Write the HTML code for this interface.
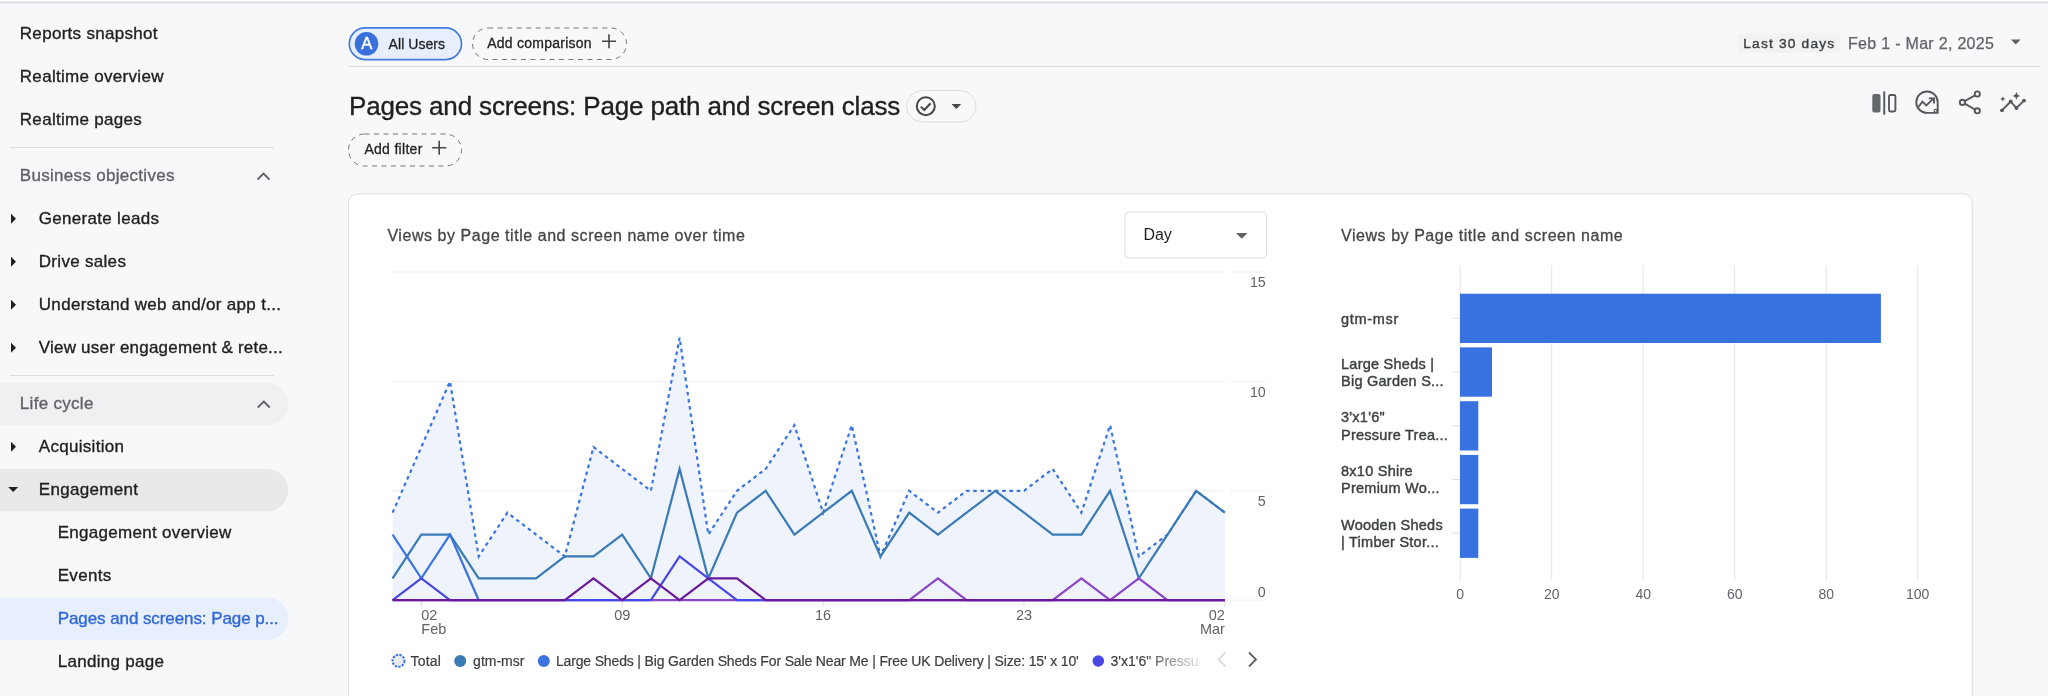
<!DOCTYPE html><html><head><meta charset="utf-8"><style>
html,body{margin:0;padding:0;background:#f7f8fa;width:2048px;height:696px;overflow:hidden}
svg{position:absolute;left:0;top:0;font-family:"Liberation Sans", sans-serif;will-change:transform}
</style></head><body>
<svg width="2048" height="696" viewBox="0 0 2048 696">
<defs>
<linearGradient id="fade" x1="0" x2="1" y1="0" y2="0">
<stop offset="0" stop-color="#fff" stop-opacity="0"/><stop offset="1" stop-color="#fff" stop-opacity="1"/>
</linearGradient>
</defs>

<rect x="0" y="0" width="2048" height="1" fill="#ffffff"/>
<rect x="0" y="1" width="2048" height="1" fill="#eceef0"/>
<rect x="0" y="2" width="2048" height="1" fill="#dadce0"/>
<rect x="0" y="3" width="2048" height="1" fill="#eceef1"/>
<rect x="0" y="4" width="2048" height="1" fill="#f3f4f7"/>
<path d="M0,383 H267 A21.25,21.25 0 0 1 267,425.5 H0 Z" fill="#eff0f2"/>
<path d="M0,469 H267 A21.25,21.25 0 0 1 267,511.5 H0 Z" fill="#e8e9eb"/>
<path d="M0,597.5 H267 A21.25,21.25 0 0 1 267,640 H0 Z" fill="#e8effc"/>
<text x="19.8" y="39" font-size="17" fill="#1f1f1f" font-weight="normal" letter-spacing="0.3" text-anchor="start" stroke="#1f1f1f" stroke-width="0.35">Reports snapshot</text>
<text x="19.8" y="81.5" font-size="17" fill="#1f1f1f" font-weight="normal" letter-spacing="0.3" text-anchor="start" stroke="#1f1f1f" stroke-width="0.35">Realtime overview</text>
<text x="19.8" y="124.6" font-size="17" fill="#1f1f1f" font-weight="normal" letter-spacing="0.3" text-anchor="start" stroke="#1f1f1f" stroke-width="0.35">Realtime pages</text>
<rect x="10" y="147" width="264" height="1" fill="#dadce0"/>
<text x="19.8" y="181.3" font-size="17" fill="#5f6368" font-weight="normal" letter-spacing="0.3" text-anchor="start" stroke="#5f6368" stroke-width="0.35">Business objectives</text>
<path d="M257.5,179.5 L263.5,173.5 L269.5,179.5" fill="none" stroke="#5f6368" stroke-width="1.8"/>
<text x="38.8" y="224.2" font-size="17" fill="#1f1f1f" font-weight="normal" letter-spacing="0.3" text-anchor="start" stroke="#1f1f1f" stroke-width="0.35">Generate leads</text>
<path d="M11.0,213.7 L16.0,218.7 L11.0,223.7 Z" fill="#1f1f1f"/>
<text x="38.8" y="267.2" font-size="17" fill="#1f1f1f" font-weight="normal" letter-spacing="0.3" text-anchor="start" stroke="#1f1f1f" stroke-width="0.35">Drive sales</text>
<path d="M11.0,256.7 L16.0,261.7 L11.0,266.7 Z" fill="#1f1f1f"/>
<text x="38.8" y="310.2" font-size="17" fill="#1f1f1f" font-weight="normal" letter-spacing="0.3" text-anchor="start" stroke="#1f1f1f" stroke-width="0.35">Understand web and/or app t...</text>
<path d="M11.0,299.7 L16.0,304.7 L11.0,309.7 Z" fill="#1f1f1f"/>
<text x="38.8" y="353.2" font-size="17" fill="#1f1f1f" font-weight="normal" letter-spacing="0.21" text-anchor="start" stroke="#1f1f1f" stroke-width="0.35">View user engagement &amp; rete...</text>
<path d="M11.0,342.7 L16.0,347.7 L11.0,352.7 Z" fill="#1f1f1f"/>
<rect x="10" y="375" width="264" height="1" fill="#dadce0"/>
<text x="19.8" y="409" font-size="17" fill="#5f6368" font-weight="normal" letter-spacing="0.3" text-anchor="start" stroke="#5f6368" stroke-width="0.35">Life cycle</text>
<path d="M257.8,407.5 L263.8,401.5 L269.8,407.5" fill="none" stroke="#5f6368" stroke-width="1.8"/>
<text x="38.8" y="452.3" font-size="17" fill="#1f1f1f" font-weight="normal" letter-spacing="0.3" text-anchor="start" stroke="#1f1f1f" stroke-width="0.35">Acquisition</text>
<path d="M11.0,441.8 L16.0,446.8 L11.0,451.8 Z" fill="#1f1f1f"/>
<text x="38.8" y="495.1" font-size="17" fill="#1f1f1f" font-weight="normal" letter-spacing="0.3" text-anchor="start" stroke="#1f1f1f" stroke-width="0.35">Engagement</text>
<path d="M8.2,487.0 L18.2,487.0 L13.2,492.0 Z" fill="#1f1f1f"/>
<text x="57.7" y="538" font-size="17" fill="#1f1f1f" font-weight="normal" letter-spacing="0.3" text-anchor="start" stroke="#1f1f1f" stroke-width="0.35">Engagement overview</text>
<text x="57.7" y="580.8" font-size="17" fill="#1f1f1f" font-weight="normal" letter-spacing="0.3" text-anchor="start" stroke="#1f1f1f" stroke-width="0.35">Events</text>
<text x="57.7" y="623.7" font-size="17" fill="#2f68d8" font-weight="normal" letter-spacing="-0.08" text-anchor="start" stroke="#2f68d8" stroke-width="0.35">Pages and screens: Page p...</text>
<text x="57.7" y="666.5" font-size="17" fill="#1f1f1f" font-weight="normal" letter-spacing="0.3" text-anchor="start" stroke="#1f1f1f" stroke-width="0.35">Landing page</text>
<rect x="349.3" y="27.9" width="112.2" height="31.7" rx="15.85" fill="#e8effc" stroke="#4279e4" stroke-width="1.7"/>
<circle cx="366.5" cy="43.8" r="11.8" fill="#3a70dc"/>
<text x="366.7" y="49.2" font-size="16.5" fill="#ffffff" font-weight="normal" letter-spacing="0" text-anchor="middle" stroke="#ffffff" stroke-width="0.5">A</text>
<text x="388.6" y="48.9" font-size="14" fill="#1f1f1f" font-weight="normal" letter-spacing="0.05" text-anchor="start" stroke="#1f1f1f" stroke-width="0.3">All Users</text>
<rect x="472.5" y="28" width="154" height="31.5" rx="15.75" fill="none" stroke="#757575" stroke-width="1" stroke-dasharray="5 4.5"/>
<text x="487.2" y="47.7" font-size="14" fill="#1f1f1f" font-weight="normal" letter-spacing="0.25" text-anchor="start" stroke="#1f1f1f" stroke-width="0.3">Add comparison</text>
<path d="M602.0,41.3 H616.0 M609,34.3 V48.3" stroke="#444746" stroke-width="1.6" fill="none"/>
<rect x="348" y="66" width="1692" height="1" fill="#dadce0"/>
<rect x="1738" y="33.3" width="102.5" height="19.4" fill="#f1f2f4"/>
<text x="1743.3" y="47.7" font-size="13.7" fill="#3c4043" font-weight="normal" letter-spacing="1.2" text-anchor="start" stroke="#3c4043" stroke-width="0.4">Last 30 days</text>
<text x="1848" y="48.5" font-size="16" fill="#5f6368" font-weight="normal" letter-spacing="0.3" text-anchor="start" stroke="#5f6368" stroke-width="0.25">Feb 1 - Mar 2, 2025</text>
<path d="M2010.8,39.4 H2020.7 L2015.75,44.4 Z" fill="#5f6368"/>
<text x="349" y="115.1" font-size="26" fill="#1f1f1f" font-weight="normal" letter-spacing="-0.15" text-anchor="start" stroke="#1f1f1f" stroke-width="0.35">Pages and screens: Page path and screen class</text>
<rect x="906.5" y="90.5" width="69.5" height="31.5" rx="15.75" fill="none" stroke="#dadce0" stroke-width="1"/>
<circle cx="925.8" cy="106.2" r="9" fill="none" stroke="#444746" stroke-width="2"/>
<path d="M920.8,106.6 L924.3,110 L930.6,103.3" fill="none" stroke="#444746" stroke-width="2"/>
<path d="M951.5,104 H961.2 L956.35,109 Z" fill="#444746"/>
<rect x="348.5" y="134" width="113" height="32" rx="16" fill="none" stroke="#757575" stroke-width="1" stroke-dasharray="5 4.5"/>
<text x="364.4" y="154.1" font-size="14" fill="#1f1f1f" font-weight="normal" letter-spacing="0.3" text-anchor="start" stroke="#1f1f1f" stroke-width="0.3">Add filter</text>
<path d="M432.2,147.7 H446.2 M439.2,140.7 V154.7" stroke="#444746" stroke-width="1.6" fill="none"/>
<rect x="1872.3" y="94" width="8.2" height="18.5" rx="2" fill="#65686c"/>
<rect x="1883.3" y="91.4" width="1.9" height="23.3" fill="#55585c"/>
<rect x="1889" y="95" width="6.4" height="16.5" rx="1.5" fill="none" stroke="#55585c" stroke-width="1.9"/>
<path d="M1937.7,102.2 A10.7,10.7 0 1 0 1927,112.9 H1937.7 Z" fill="none" stroke="#55585c" stroke-width="1.9" stroke-linejoin="round"/>
<circle cx="1935.6" cy="110.8" r="1.5" fill="#f7f8fa" stroke="#55585c" stroke-width="1.2"/>
<path d="M1918.6,106.8 L1922.4,101.6 L1926.3,105.4 L1933,98.9" fill="none" stroke="#55585c" stroke-width="1.9"/>
<path d="M1928.8,98.4 H1934 V103.4" fill="none" stroke="#55585c" stroke-width="1.9"/>
<circle cx="1977.3" cy="94" r="2.6" fill="none" stroke="#55585c" stroke-width="1.9"/>
<circle cx="1962.4" cy="102.4" r="2.6" fill="none" stroke="#55585c" stroke-width="1.9"/>
<circle cx="1977.3" cy="110.8" r="2.6" fill="none" stroke="#55585c" stroke-width="1.9"/>
<path d="M1964.7,101.1 L1975,95.3 M1964.7,103.7 L1975,109.5" fill="none" stroke="#55585c" stroke-width="1.9"/>
<path d="M2002,110.3 L2010.7,101.5 L2016.4,108.1 L2024,100.6" fill="none" stroke="#55585c" stroke-width="1.9" stroke-linejoin="round"/>
<circle cx="2002" cy="110.3" r="1.9" fill="#55585c"/>
<circle cx="2010.7" cy="101.5" r="1.9" fill="#55585c"/>
<circle cx="2016.4" cy="108.1" r="1.9" fill="#55585c"/>
<circle cx="2024" cy="100.6" r="1.9" fill="#55585c"/>
<path d="M2016.4,92 L2017.6,94.7 L2020.3,95.9 L2017.6,97.1 L2016.4,99.8 L2015.2,97.1 L2012.5,95.9 L2015.2,94.7 Z" fill="#55585c"/>
<path d="M2002.8,96.4 L2003.6,98.1 L2005.3,98.9 L2003.6,99.7 L2002.8,101.4 L2002,99.7 L2000.3,98.9 L2002,98.1 Z" fill="#55585c"/>
<rect x="348.5" y="193.8" width="1623.8" height="560" rx="9" fill="#ffffff" stroke="#dadce0" stroke-width="1"/>
<text x="387.4" y="240.8" font-size="16" fill="#444746" font-weight="normal" letter-spacing="0.55" text-anchor="start" stroke="#444746" stroke-width="0.3">Views by Page title and screen name over time</text>
<rect x="1125" y="212" width="141.5" height="46" rx="4" fill="#fff" stroke="#dadce0" stroke-width="1"/>
<text x="1143.4" y="240" font-size="16" fill="#1f1f1f" font-weight="normal" letter-spacing="0" text-anchor="start" >Day</text>
<path d="M1236,233 H1247.6 L1241.8,238.8 Z" fill="#5f6368"/>
<rect x="392" y="271.5" width="832.5" height="1" fill="#eceef0"/>
<rect x="1229.5" y="271.5" width="36" height="1" fill="#eceef0"/>
<text x="1265.8" y="287" font-size="14.3" fill="#5f6368" font-weight="normal" letter-spacing="0" text-anchor="end" >15</text>
<rect x="392" y="380.9" width="832.5" height="1" fill="#eceef0"/>
<rect x="1229.5" y="380.9" width="36" height="1" fill="#eceef0"/>
<text x="1265.8" y="396.9" font-size="14.3" fill="#5f6368" font-weight="normal" letter-spacing="0" text-anchor="end" >10</text>
<rect x="392" y="490.3" width="832.5" height="1" fill="#eceef0"/>
<rect x="1229.5" y="490.3" width="36" height="1" fill="#eceef0"/>
<text x="1265.8" y="506.2" font-size="14.3" fill="#5f6368" font-weight="normal" letter-spacing="0" text-anchor="end" >5</text>
<rect x="1229.5" y="599.7" width="36" height="1" fill="#eceef0"/>
<text x="1265.8" y="596.6" font-size="14.3" fill="#5f6368" font-weight="normal" letter-spacing="0" text-anchor="end" >0</text>
<path d="M392.60,600.2 L392.60,512.68 421.30,447.04 450.00,381.40 478.70,556.44 507.40,512.68 536.10,534.56 564.80,556.44 593.50,447.04 622.20,468.92 650.90,490.80 679.60,337.64 708.30,534.56 737.00,490.80 765.70,468.92 794.40,425.16 823.10,512.68 851.80,425.16 880.50,556.44 909.20,490.80 937.90,512.68 966.60,490.80 995.30,490.80 1024.00,490.80 1052.70,468.92 1081.40,512.68 1110.10,425.16 1138.80,556.44 1167.50,534.56 1196.20,490.80 1224.90,512.68 L1224.90,600.2 Z" fill="#eef3fc"/>
<rect x="420.8" y="600.5" width="1" height="6.5" fill="#dadce0"/>
<rect x="621.7" y="600.5" width="1" height="6.5" fill="#dadce0"/>
<rect x="822.6" y="600.5" width="1" height="6.5" fill="#dadce0"/>
<rect x="1023.5" y="600.5" width="1" height="6.5" fill="#dadce0"/>
<rect x="1224.4" y="600.5" width="1" height="6.5" fill="#dadce0"/>
<rect x="392" y="599.7" width="832.5" height="1" fill="#dadce0"/>
<polyline points="392.60,512.68 421.30,447.04 450.00,381.40 478.70,556.44 507.40,512.68 536.10,534.56 564.80,556.44 593.50,447.04 622.20,468.92 650.90,490.80 679.60,337.64 708.30,534.56 737.00,490.80 765.70,468.92 794.40,425.16 823.10,512.68 851.80,425.16 880.50,556.44 909.20,490.80 937.90,512.68 966.60,490.80 995.30,490.80 1024.00,490.80 1052.70,468.92 1081.40,512.68 1110.10,425.16 1138.80,556.44 1167.50,534.56 1196.20,490.80 1224.90,512.68" fill="none" stroke="#3b74e0" stroke-width="2.2" stroke-dasharray="3.6 3.65"/>
<polyline points="392.60,578.32 421.30,534.56 450.00,534.56 478.70,578.32 507.40,578.32 536.10,578.32 564.80,556.44 593.50,556.44 622.20,534.56 650.90,578.32 679.60,468.92 708.30,578.32 737.00,512.68 765.70,490.80 794.40,534.56 823.10,512.68 851.80,490.80 880.50,556.44 909.20,512.68 937.90,534.56 966.60,512.68 995.30,490.80 1024.00,512.68 1052.70,534.56 1081.40,534.56 1110.10,490.80 1138.80,578.32 1167.50,534.56 1196.20,490.80 1224.90,512.68" fill="none" stroke="#3a7ab5" stroke-width="2.2" stroke-linejoin="miter"/>
<polyline points="392.60,534.56 421.30,578.32 450.00,534.56 478.70,600.20" fill="none" stroke="#3b73e0" stroke-width="2.2"/>
<polyline points="392.60,600.20 421.30,600.20 450.00,600.20 478.70,600.20 507.40,600.20 536.10,600.20 564.80,600.20 593.50,600.20 622.20,600.20 650.90,600.20 679.60,600.20 708.30,600.20 737.00,600.20 765.70,600.20 794.40,600.20 823.10,600.20 851.80,600.20 880.50,600.20 909.20,600.20 937.90,578.32 966.60,600.20 995.30,600.20 1024.00,600.20 1052.70,600.20 1081.40,578.32 1110.10,600.20 1138.80,578.32 1167.50,600.20 1196.20,600.20 1224.90,600.20" fill="none" stroke="#8a45c8" stroke-width="2.2"/>
<polyline points="392.60,600.20 421.30,578.32 450.00,600.20 478.70,600.20 507.40,600.20 536.10,600.20 564.80,600.20 593.50,600.20 622.20,600.20 650.90,600.20 679.60,556.44 708.30,578.32 737.00,600.20 765.70,600.20 794.40,600.20 823.10,600.20 851.80,600.20 880.50,600.20 909.20,600.20 937.90,600.20 966.60,600.20 995.30,600.20 1024.00,600.20 1052.70,600.20 1081.40,600.20 1110.10,600.20 1138.80,600.20 1167.50,600.20 1196.20,600.20 1224.90,600.20" fill="none" stroke="#4848e6" stroke-width="2.2"/>
<polyline points="392.60,600.20 421.30,600.20 450.00,600.20 478.70,600.20 507.40,600.20 536.10,600.20 564.80,600.20 593.50,578.32 622.20,600.20 650.90,578.32 679.60,600.20 708.30,578.32 737.00,578.32 765.70,600.20 794.40,600.20 823.10,600.20 851.80,600.20 880.50,600.20 909.20,600.20 937.90,600.20 966.60,600.20 995.30,600.20 1024.00,600.20 1052.70,600.20 1081.40,600.20 1110.10,600.20 1138.80,600.20 1167.50,600.20 1196.20,600.20 1224.90,600.20" fill="none" stroke="#6a1a9a" stroke-width="2.2"/>
<text x="421.3" y="619.8" font-size="14.5" fill="#5f6368" font-weight="normal" letter-spacing="0" text-anchor="start" >02</text>
<text x="421.3" y="633.9" font-size="14.5" fill="#5f6368" font-weight="normal" letter-spacing="0" text-anchor="start" >Feb</text>
<text x="622.2" y="619.8" font-size="14.5" fill="#5f6368" font-weight="normal" letter-spacing="0" text-anchor="middle" >09</text>
<text x="823.1" y="619.8" font-size="14.5" fill="#5f6368" font-weight="normal" letter-spacing="0" text-anchor="middle" >16</text>
<text x="1024.0" y="619.8" font-size="14.5" fill="#5f6368" font-weight="normal" letter-spacing="0" text-anchor="middle" >23</text>
<text x="1224.9" y="619.8" font-size="14.5" fill="#5f6368" font-weight="normal" letter-spacing="0" text-anchor="end" >02</text>
<text x="1224.9" y="633.9" font-size="14.5" fill="#5f6368" font-weight="normal" letter-spacing="0" text-anchor="end" >Mar</text>
<circle cx="398.5" cy="660.8" r="6" fill="#e8eaed" stroke="#3b74e0" stroke-width="2" stroke-dasharray="2.3 1.25"/>
<text x="410.5" y="665.7" font-size="14" fill="#3c4043" font-weight="normal" letter-spacing="0.2" text-anchor="start" stroke="#3c4043" stroke-width="0.2">Total</text>
<circle cx="460.2" cy="661" r="6" fill="#3a7ab5"/>
<text x="473.1" y="665.7" font-size="14" fill="#3c4043" font-weight="normal" letter-spacing="0" text-anchor="start" stroke="#3c4043" stroke-width="0.2">gtm-msr</text>
<circle cx="543.8" cy="661" r="6" fill="#3b73e0"/>
<text x="555.9" y="665.7" font-size="14" fill="#3c4043" font-weight="normal" letter-spacing="-0.15" text-anchor="start" stroke="#3c4043" stroke-width="0.2">Large Sheds | Big Garden Sheds For Sale Near Me | Free UK Delivery | Size: 15&#x27; x 10&#x27;</text>
<circle cx="1098.3" cy="661" r="5.8" fill="#4848e6"/>
<text x="1110.5" y="665.7" font-size="14" fill="#3c4043" font-weight="normal" letter-spacing="0" text-anchor="start" stroke="#3c4043" stroke-width="0.2">3&#x27;x1&#x27;6&quot; Pressure Treated</text>
<rect x="1140" y="645" width="70" height="30" fill="url(#fade)"/>
<rect x="1200" y="645" width="100" height="30" fill="#fff"/>
<path d="M1225.5,652.5 L1218.5,659.5 L1225.5,666.5" fill="none" stroke="#dadce0" stroke-width="1.8"/>
<path d="M1249,652.5 L1256,659.5 L1249,666.5" fill="none" stroke="#5f6368" stroke-width="1.8"/>
<text x="1341" y="240.8" font-size="16" fill="#444746" font-weight="normal" letter-spacing="0.55" text-anchor="start" stroke="#444746" stroke-width="0.3">Views by Page title and screen name</text>
<rect x="1459.7" y="265.5" width="1" height="315" fill="#e3e4e6"/>
<text x="1460.2" y="599.4" font-size="14" fill="#5f6368" font-weight="normal" letter-spacing="0" text-anchor="middle" >0</text>
<rect x="1551.2" y="265.5" width="1" height="315" fill="#e3e4e6"/>
<text x="1551.7" y="599.4" font-size="14" fill="#5f6368" font-weight="normal" letter-spacing="0" text-anchor="middle" >20</text>
<rect x="1642.7" y="265.5" width="1" height="315" fill="#e3e4e6"/>
<text x="1643.2" y="599.4" font-size="14" fill="#5f6368" font-weight="normal" letter-spacing="0" text-anchor="middle" >40</text>
<rect x="1734.2" y="265.5" width="1" height="315" fill="#e3e4e6"/>
<text x="1734.7" y="599.4" font-size="14" fill="#5f6368" font-weight="normal" letter-spacing="0" text-anchor="middle" >60</text>
<rect x="1825.7" y="265.5" width="1" height="315" fill="#e3e4e6"/>
<text x="1826.2" y="599.4" font-size="14" fill="#5f6368" font-weight="normal" letter-spacing="0" text-anchor="middle" >80</text>
<rect x="1917.2" y="265.5" width="1" height="315" fill="#e3e4e6"/>
<text x="1917.7" y="599.4" font-size="14" fill="#5f6368" font-weight="normal" letter-spacing="0" text-anchor="middle" >100</text>
<rect x="1460.0" y="293.7" width="420.9" height="49.3" fill="#3872e0"/>
<rect x="1452.5" y="317.8" width="7.5" height="1" fill="#dadce0"/>
<text x="1341" y="323.6" font-size="14.5" fill="#3c4043" font-weight="normal" letter-spacing="0.7" text-anchor="start" stroke="#3c4043" stroke-width="0.4">gtm-msr</text>
<rect x="1460.0" y="347.4" width="32.0" height="49.3" fill="#3872e0"/>
<rect x="1452.5" y="371.5" width="7.5" height="1" fill="#dadce0"/>
<text x="1341" y="368.73" font-size="14.5" fill="#3c4043" font-weight="normal" letter-spacing="0.25" text-anchor="start" stroke="#3c4043" stroke-width="0.4">Large Sheds |</text>
<text x="1341" y="385.93" font-size="14.5" fill="#3c4043" font-weight="normal" letter-spacing="0.25" text-anchor="start" stroke="#3c4043" stroke-width="0.4">Big Garden S...</text>
<rect x="1460.0" y="401.2" width="18.3" height="49.3" fill="#3872e0"/>
<rect x="1452.5" y="425.3" width="7.5" height="1" fill="#dadce0"/>
<text x="1341" y="422.46" font-size="14.5" fill="#3c4043" font-weight="normal" letter-spacing="0.25" text-anchor="start" stroke="#3c4043" stroke-width="0.4">3&#x27;x1&#x27;6&quot;</text>
<text x="1341" y="439.65999999999997" font-size="14.5" fill="#3c4043" font-weight="normal" letter-spacing="0.25" text-anchor="start" stroke="#3c4043" stroke-width="0.4">Pressure Trea...</text>
<rect x="1460.0" y="454.9" width="18.3" height="49.3" fill="#3872e0"/>
<rect x="1452.5" y="479.0" width="7.5" height="1" fill="#dadce0"/>
<text x="1341" y="476.19" font-size="14.5" fill="#3c4043" font-weight="normal" letter-spacing="0.25" text-anchor="start" stroke="#3c4043" stroke-width="0.4">8x10 Shire</text>
<text x="1341" y="493.39" font-size="14.5" fill="#3c4043" font-weight="normal" letter-spacing="0.25" text-anchor="start" stroke="#3c4043" stroke-width="0.4">Premium Wo...</text>
<rect x="1460.0" y="508.6" width="18.3" height="49.3" fill="#3872e0"/>
<rect x="1452.5" y="532.7" width="7.5" height="1" fill="#dadce0"/>
<text x="1341" y="529.9200000000001" font-size="14.5" fill="#3c4043" font-weight="normal" letter-spacing="0.25" text-anchor="start" stroke="#3c4043" stroke-width="0.4">Wooden Sheds</text>
<text x="1341" y="547.12" font-size="14.5" fill="#3c4043" font-weight="normal" letter-spacing="0.25" text-anchor="start" stroke="#3c4043" stroke-width="0.4">| Timber Stor...</text>
</svg></body></html>
